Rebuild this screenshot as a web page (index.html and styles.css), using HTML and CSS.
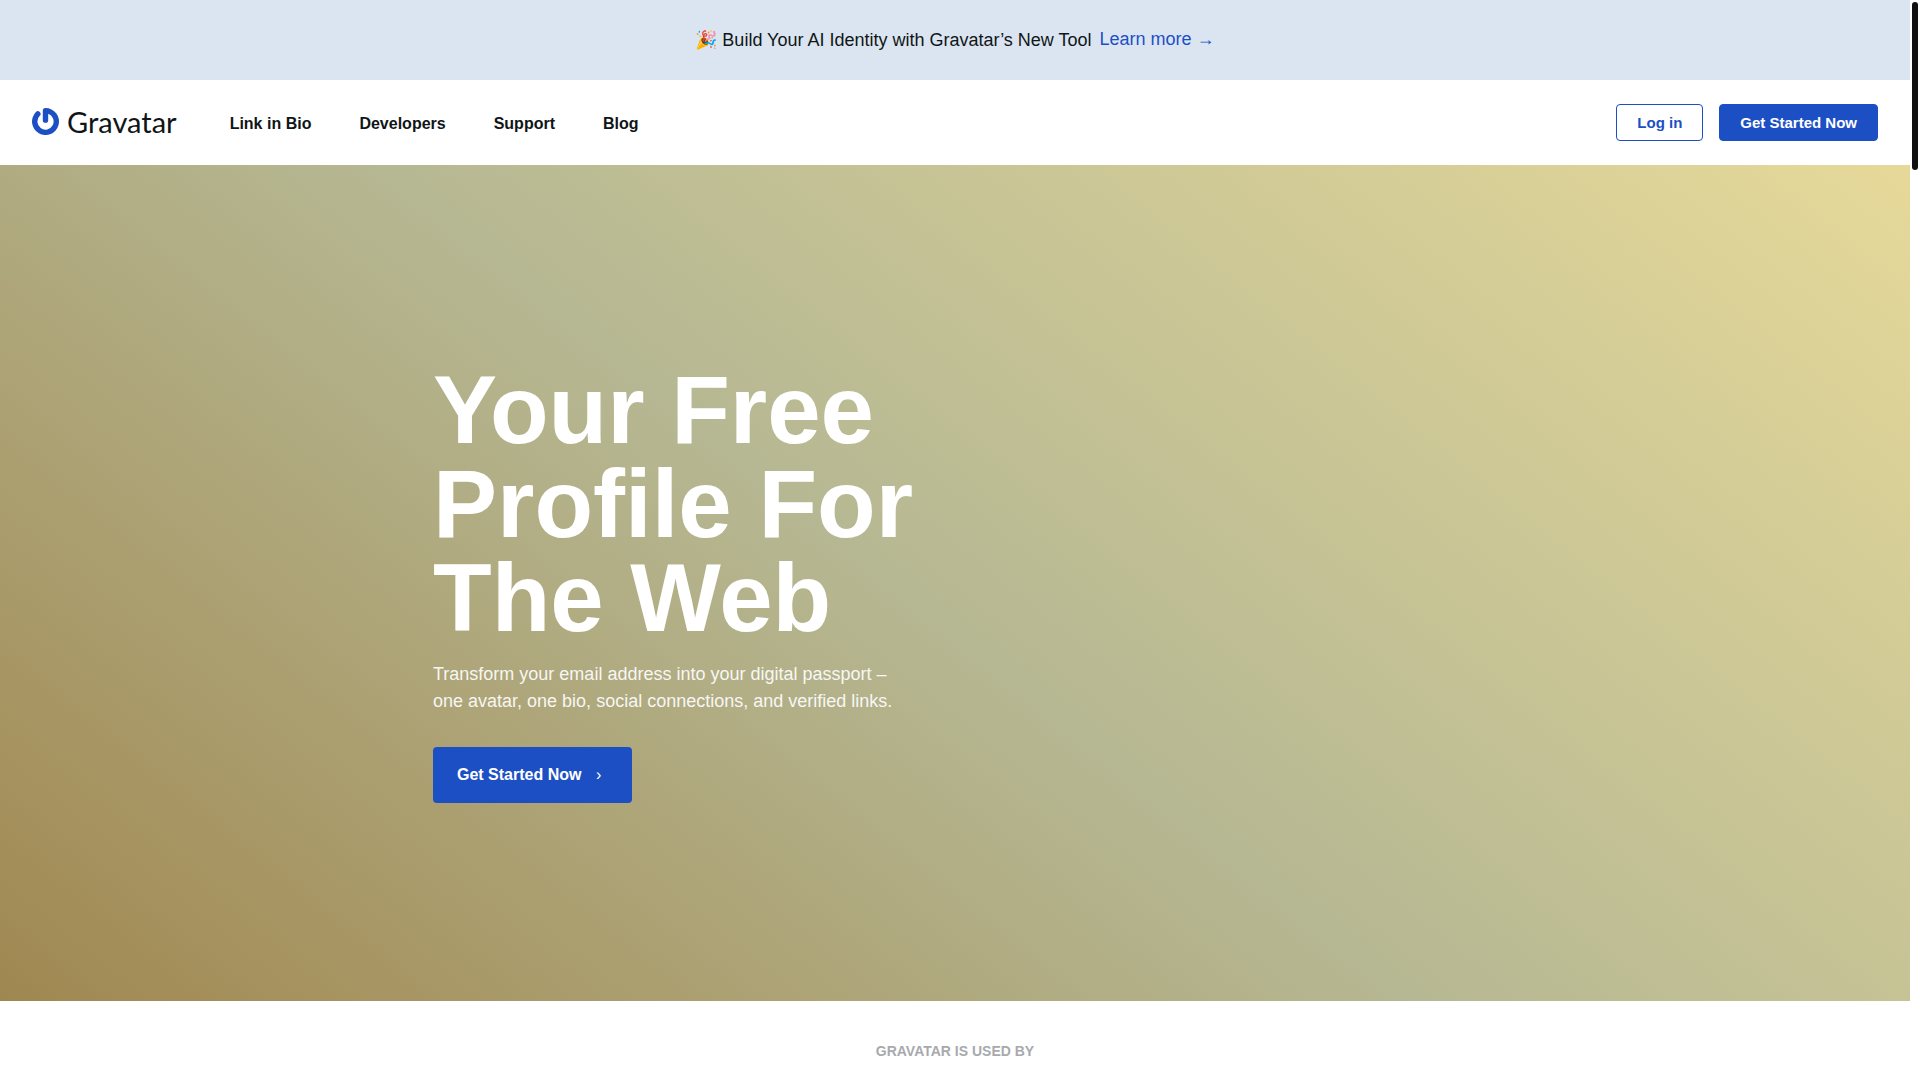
FILE: index.html
```html
<!DOCTYPE html>
<html lang="en">
<head>
    <meta charset="UTF-8">
    <meta name="viewport" content="width=device-width, initial-scale=1.0">
    <title>Gravatar</title>
    <link rel="stylesheet" href="styles.css">
</head>
<body>

<div class="page">
    <div class="banner">
        <span>🎉 Build Your AI Identity with Gravatar’s New Tool</span>
        <a class="banner-link" href="#">Learn more →</a>
    </div>

    <header class="header">
        <a class="logo" href="#">
            <svg class="logo-icon" viewBox="0 0 27 27" aria-hidden="true">
                <path fill="currentColor" d="M10.8 2.699v9.45a2.699 2.699 0 005.398 0V5.862a8.101 8.101 0 11-8.423 1.913 2.702 2.702 0 00-3.821-3.821A13.5 13.5 0 1013.499 0 2.699 2.699 0 0010.8 2.699z"/>
            </svg>
            <span>Gravatar</span>
        </a>
        <nav class="nav">
            <a href="#">Link in Bio</a>
            <a href="#">Developers</a>
            <a href="#">Support</a>
            <a href="#">Blog</a>
        </nav>
        <div class="actions">
            <button class="button button-outline">Log in</button>
            <button class="button">Get Started Now</button>
        </div>
    </header>

    <main>
        <section class="hero">
            <div class="hero-content">
                <h1>Your Free Profile For The Web</h1>
                <p>Transform your email address into your digital passport – one avatar, one bio, social connections, and verified links.</p>
                <button class="hero-button">Get Started Now <span class="arrow">›</span></button>
            </div>
        </section>

        <section class="used-by">
            <h2>Gravatar is used by</h2>
        </section>
    </main>
</div>

<div class="scrollbar" aria-hidden="true">
    <div class="scrollbar-thumb"></div>
</div>

</body>
</html>
```

FILE: styles.css
```css
* {
    box-sizing: border-box;
}
body {
    display: flex;
    align-items: flex-start;
    margin: 0;
    background-color: #fff;
    color: #101517;
    font-family: "Liberation Sans", Arial, sans-serif;
}
a {
    color: inherit;
    text-decoration: none;
}
button {
    border: none;
    font-family: inherit;
    cursor: pointer;
}
.page {
    flex: 1;
    min-width: 0;
}

/* banner */
.banner {
    display: flex;
    justify-content: center;
    gap: 8px;
    padding: 24px 32px;
    background-color: #dbe5f1;
    font-size: 18px;
    line-height: 32px;
}
.banner-link {
    color: #1d4fc4;
    line-height: 30px;
}

/* header */
.header {
    display: flex;
    align-items: center;
    padding: 24px 32px;
}
.logo {
    display: flex;
    align-items: center;
    gap: 8px;
    padding-bottom: 2px;
    font-family: Lato, sans-serif;
    font-size: 29px;
    line-height: 32px;
}
.logo-icon {
    width: 27px;
    height: 27px;
    color: #1d4fc4;
}
.nav {
    display: flex;
    gap: 48px;
    margin-left: 53px;
    padding-top: 2px;
    font-size: 16px;
    font-weight: bold;
}
.actions {
    display: flex;
    gap: 16px;
    margin-left: auto;
}
.button {
    padding: 0 20px;
    border: 1px solid #1d4fc4;
    border-radius: 4px;
    background-color: #1d4fc4;
    color: #fff;
    font-size: 15px;
    font-weight: bold;
    line-height: 35px;
}
.button-outline {
    background-color: #fff;
    color: #1d4fc4;
}

/* hero */
.hero {
    padding: 198px 32px;
    background: linear-gradient(39deg, #9f8751 0%, #a5915d 9%, #b6b893 48%, #e5d899 99%);
    color: #fff;
}
.hero-content {
    max-width: 1044px;
    margin: 0 auto;
}
.hero h1 {
    max-width: 522px;
    margin: 0 0 16px;
    font-size: 96px;
    line-height: 94px;
}
.hero p {
    max-width: 480px;
    margin: 0 0 32px;
    font-size: 18px;
    line-height: 27px;
    opacity: 0.9;
}
.hero-button {
    padding: 0 31px 0 24px;
    border-radius: 4px;
    background-color: #1d4fc4;
    color: #fff;
    font-size: 16px;
    font-weight: bold;
    line-height: 56px;
}
.arrow {
    margin-left: 10px;
    font-weight: normal;
}

/* used by */
.used-by {
    padding: 40px 32px;
}
.used-by h2 {
    margin: 0;
    color: #a7aaad;
    font-size: 14px;
    line-height: 20px;
    text-align: center;
    text-transform: uppercase;
}

/* scrollbar */
.scrollbar {
    position: sticky;
    top: 0;
    width: 10px;
    height: 100vh;
    padding: 2px;
}
.scrollbar-thumb {
    height: 168px;
    border-radius: 3px;
    background-color: #101010;
}
```
